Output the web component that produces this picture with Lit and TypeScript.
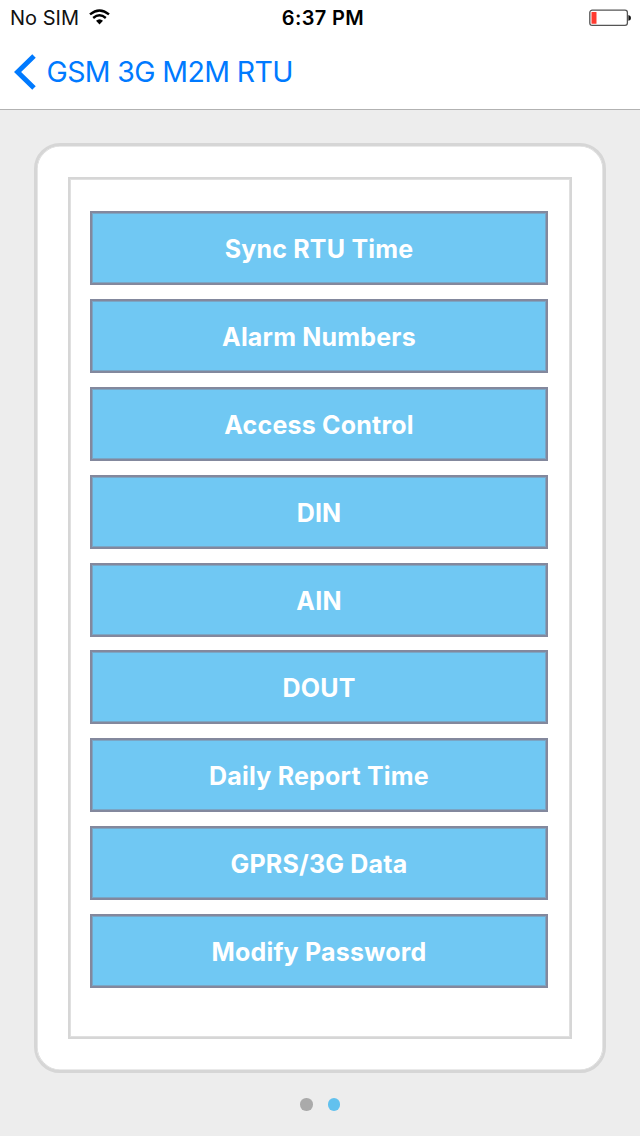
import { LitElement, html, css } from "lit";
import { customElement, property } from "lit/decorators.js";

@customElement("status-bar")
class StatusBar extends LitElement {
  static styles = css`
    :host {
      display: grid;
      grid-template-columns: 1fr auto 1fr;
      height: 36px;
      padding: 0 9px 0 10px;
      box-sizing: border-box;
      align-items: center;
      font-size: 20px;
      color: #111;
    }
    .carrier { display: flex; align-items: center; gap: 10px; line-height: 36px; letter-spacing: 0; }
    .time { font-weight: 600; line-height: 36px; letter-spacing: 0.35px; padding-left: 5px; color: #000; }
    .battery { justify-self: end; display: block; }
    .wifi { display: block; margin-top: -2px; }
  `;
  render() {
    return html`
      <div class="carrier">
        <span>No SIM</span>
        <svg class="wifi" width="21" height="16" viewBox="0 0 21 16">
          <g fill="none" stroke="#000" stroke-width="2.4">
            <path d="M1 5.4 Q10.5 -2.6 20 5.4" />
            <path d="M4.2 9 Q10.5 3.6 16.8 9" />
          </g>
          <path d="M7 11.7 Q10.5 8.7 14 11.7 L10.5 15.4Z" fill="#000" />
        </svg>
      </div>
      <div class="time">6:37 PM</div>
      <svg class="battery" width="42" height="18" viewBox="0 0 42 18">
        <rect x="0.8" y="1.2" width="37.6" height="15.2" rx="2.4" fill="#fff" stroke="#555" stroke-width="1.3" />
        <rect x="2.5" y="2.9" width="5" height="11.8" rx="0.5" fill="#ff3b30" />
        <path d="M39.4 6 Q42 6.4 42 8.9 T39.4 11.8Z" fill="#111" />
      </svg>
    `;
  }
}

@customElement("nav-header")
class NavHeader extends LitElement {
  @property() label = "";
  static styles = css`
    :host {
      display: flex;
      align-items: center;
      gap: 10.5px;
      height: 74px;
      padding: 0 14px;
      box-sizing: border-box;
      border-bottom: 1px solid #b2b2b2;
      color: #007aff;
      font-size: 28.5px;
    }
    .chevron { display: block; margin-top: -2px; }
    .label { line-height: 72px; margin-top: -2px; letter-spacing: -0.62px; }
  `;
  render() {
    return html`
      <svg class="chevron" width="22" height="36" viewBox="0 0 22 36">
        <path d="M20 2 L3.6 18 L20 34" fill="none" stroke="#007aff" stroke-width="5" />
      </svg>
      <span class="label">${this.label}</span>
    `;
  }
}

@customElement("app-root")
class AppRoot extends LitElement {
  private items = [
    "Sync RTU Time",
    "Alarm Numbers",
    "Access Control",
    "DIN",
    "AIN",
    "DOUT",
    "Daily Report Time",
    "GPRS/3G Data",
    "Modify Password",
  ];
  static styles = css`
    :host {
      display: flex;
      flex-direction: column;
      height: 1136px;
      box-sizing: border-box;
      background: #fff;
      font-family: Inter, "Liberation Sans", sans-serif;
    }
    .page {
      flex: 1;
      display: flex;
      flex-direction: column;
      align-items: center;
      padding-top: 33px;
      background: #ededed;
    }
    .card {
      width: 572px;
      height: 930px;
      box-sizing: border-box;
      padding: 31px;
      border: 3px solid #d6d6d6;
      border-radius: 26px;
      background: #fff;
      box-shadow: inset 0 0 0 0.6px #d6d6d6;
    }
    .panel {
      height: 862px;
      box-sizing: border-box;
      border: 2px solid #d6d6d6;
      box-shadow: inset 0 0 0 1px #e0e0e0;
      padding: 32px 22px 0 20px;
      display: flex;
      flex-direction: column;
      gap: 13.88px;
    }
    .action {
      flex: none;
      height: 74px;
      box-sizing: border-box;
      margin: 0;
      padding: 1px 0 0;
      border: 2px solid #83889d;
      border-radius: 0;
      background: #70c8f3;
      box-shadow: inset 0 0 0 1px #7aa5c4;
      color: #fff;
      font: 700 25px/70px Inter, "Liberation Sans", sans-serif;
      letter-spacing: 0.2px;
      text-align: center;
    }
    .dots { display: flex; gap: 15px; margin-top: 25px; }
    .dot { width: 12.5px; height: 12.5px; border-radius: 50%; background: #aaa; }
    .dot.active { background: #62c1ee; }
  `;
  render() {
    return html`
      <status-bar></status-bar>
      <nav-header label="GSM 3G M2M RTU"></nav-header>
      <main class="page">
        <section class="card">
          <div class="panel">
            ${this.items.map((t) => html`<button class="action">${t}</button>`)}
          </div>
        </section>
        <div class="dots"><span class="dot"></span><span class="dot active"></span></div>
      </main>
    `;
  }
}
